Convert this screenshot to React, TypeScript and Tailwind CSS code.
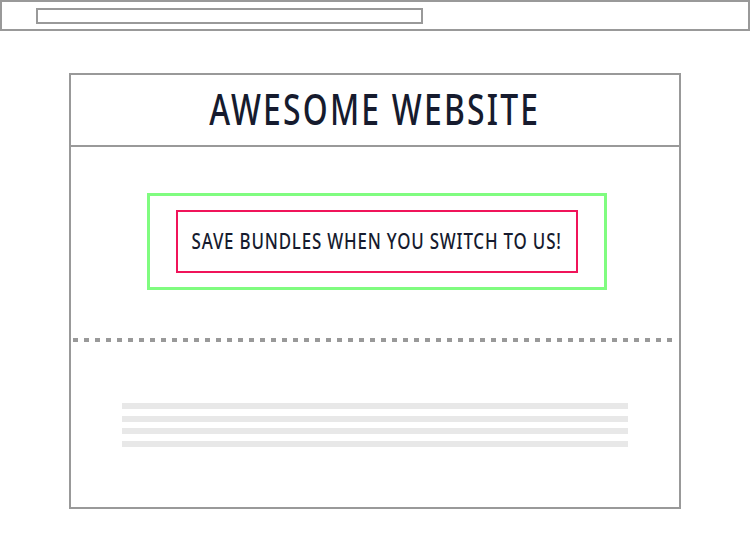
import React from 'react'

export default function App() {
  return (
    <div className="w-[750px] h-[550px] bg-white font-['Noto_Sans',sans-serif]">
      {/* browser bar */}
      <div className="h-[31px] border-2 border-[#999] pl-[34px] pt-[6px]">
        <div className="w-[387px] h-[16px] border-2 border-[#999]" />
      </div>

      <div className="mx-auto mt-[42px] w-[612px] h-[436px] border-2 border-[#999]">
        <header className="h-[72px] pb-[3px] border-b-2 border-[#999] flex items-center justify-center">
          <h1 className="inline-block scale-x-[0.74] text-[43px] leading-none font-medium tracking-[3px] text-[#161b2e] whitespace-nowrap">
            AWESOME WEBSITE
          </h1>
        </header>

        <div className="pt-[46px]">
          <div className="ml-[76px] w-[460px] h-[97px] border-[3px] border-[#80fc80] px-[26px] py-[14px]">
            <div className="h-[63px] border-2 border-[#f0145a] flex items-center justify-center">
              <p className="inline-block scale-x-[0.806] text-[21px] leading-none font-medium tracking-[1px] text-[#161b2e] whitespace-nowrap">
                SAVE BUNDLES WHEN YOU SWITCH TO US!
              </p>
            </div>
          </div>

          <div className="mt-[48px] mx-[2px] h-[4px] bg-[repeating-linear-gradient(90deg,#999_0_5px,transparent_5px_11px)]" />

          <div className="mx-auto mt-[61px] w-[506px] flex flex-col gap-[6.5px]">
            <div className="h-[6px] bg-[#e8e8e8]" />
            <div className="h-[6px] bg-[#e8e8e8]" />
            <div className="h-[6px] bg-[#e8e8e8]" />
            <div className="h-[6px] bg-[#e8e8e8]" />
          </div>
        </div>
      </div>
    </div>
  )
}
